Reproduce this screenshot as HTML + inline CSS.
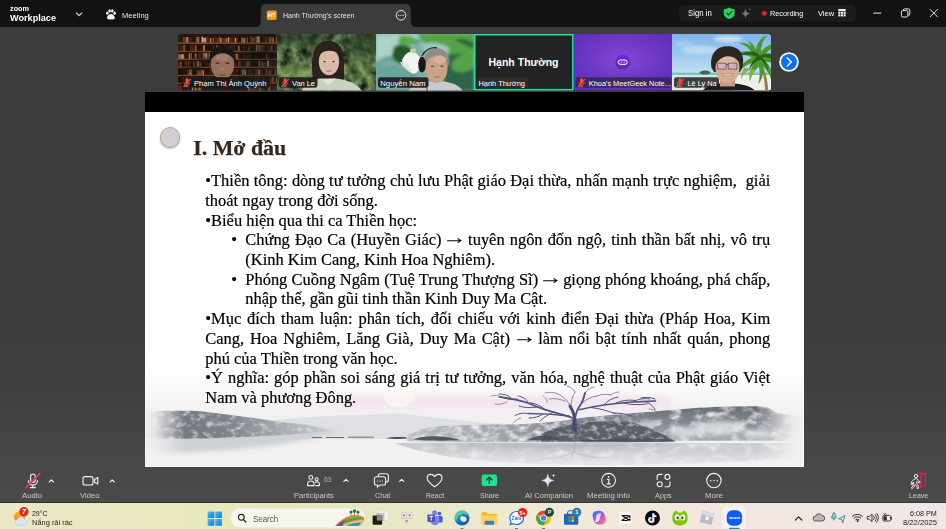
<!DOCTYPE html>
<html lang="vi">
<head>
<meta charset="utf-8">
<title>Zoom Workplace</title>
<style>
html,body{margin:0;padding:0;}
body{width:946px;height:529px;overflow:hidden;position:relative;background:linear-gradient(180deg,#3c3c3c 0,#3c3c3c 320px,#414141 400px,#474747 460px,#4a4a4a 502px);font-family:"Liberation Sans",sans-serif;color:#fff;}
.abs{position:absolute;}
.fx{position:absolute;white-space:pre;line-height:1;transform-origin:0 0;}
#titlebar{left:0;top:0;width:946px;height:27px;background:#121212;}
#tab{left:260px;top:4px;width:150px;height:23px;background:#424242;border-radius:6px 6px 0 0;}
.tt{position:absolute;white-space:pre;font-size:8.5px;color:#e8e8e8;}
/* thumbnails */
.thumb{position:absolute;top:34px;height:57px;overflow:hidden;}
.nm{position:absolute;left:1px;bottom:1px;height:11px;line-height:11px;font-size:7.8px;color:#fff;background:rgba(30,30,30,.55);padding:0 3px 0 3px;border-radius:2px;white-space:pre;}
/* slide */
#black{left:145px;top:92px;width:658.5px;height:20px;background:#000;}
#slide{left:145px;top:112px;width:658.5px;height:354.6px;background:#fff;overflow:hidden;}
.ln{position:absolute;white-space:pre;font-family:"Liberation Serif",serif;font-size:16.45px;line-height:20px;color:#000;height:20px;-webkit-text-stroke:0.2px #000;}
.ar{display:inline-block;transform:scale(1.48,1.15) translateY(-1.6px);}
.j{white-space:normal;text-align:justify;text-align-last:justify;}
/* toolbar */
.tb{position:absolute;top:488px;font-size:8px;color:#cfcfcf;text-align:center;width:60px;margin-left:-30px;white-space:pre;}
/* taskbar */
#taskbar{left:0;top:503px;width:946px;height:26px;background:linear-gradient(90deg,#ece6c4 0%,#ebe8c2 12%,#e6e8b8 30%,#e9e9c8 45%,#f0ead8 60%,#f3e6df 75%,#f1e6e6 100%);}
.tk{position:absolute;color:#222;white-space:pre;}
</style>
</head>
<body>
<!-- title bar -->
<div id="titlebar" class="abs"></div>
<!--TT-START-->
<svg class="abs" style="left:0;top:0" width="946" height="28" viewBox="0 0 946 28" font-family="Liberation Sans, sans-serif">
<!-- tab shape with flared bottom -->
<path d="M255 27c3.500 0 5.800-2 5.800-5.500V9a5 5 0 0 1 5-5h140a5 5 0 0 1 5 5v12.500c0 3.500 2.300 5.500 5.800 5.500v1H255z" fill="#3c3c3c"/>
<!-- workplace chevron -->
<path d="M76.400 13l2.700 2.700l2.700-2.700" fill="none" stroke="#d8d8d8" stroke-width="1.100" stroke-linecap="round" stroke-linejoin="round"/>
<!-- paw / meeting icon -->
<g fill="#f4f4f4">
  <ellipse cx="107.300" cy="13.200" rx="1.250" ry="1.600"/><ellipse cx="109.600" cy="10.900" rx="1.250" ry="1.600"/><ellipse cx="112.300" cy="10.900" rx="1.250" ry="1.600"/><ellipse cx="114.600" cy="13.200" rx="1.250" ry="1.600"/>
  <path d="M110.950 14c2 0 3.900 2 3.900 3.800c0 1.300-1 1.700-2 1.700c-.800 0-1.300-.300-1.900-.300s-1.100.300-1.900.300c-1 0-2-.400-2-1.700c0-1.800 1.900-3.800 3.900-3.800z"/>
</g>
<!-- HT badge -->
<rect x="266.700" y="10.400" width="10" height="9.500" rx="2" fill="#f7981c"/>
<text x="271.700" y="17.300" font-size="5.600" font-weight="bold" fill="#fff" text-anchor="middle">HT</text>
<!-- tab more -->
<circle cx="401" cy="15.300" r="4.800" fill="none" stroke="#e6e6e6" stroke-width="1"/>
<circle cx="398.800" cy="15.300" r=".65" fill="#e6e6e6"/><circle cx="401" cy="15.300" r=".65" fill="#e6e6e6"/><circle cx="403.200" cy="15.300" r=".65" fill="#e6e6e6"/>
<!-- right pill -->
<rect x="679" y="5" width="177" height="16.700" rx="5" fill="#1c1c1c"/>
<!-- shield -->
<path d="M729.200 7.600c1.700 1 3.500 1.500 5.400 1.600v4.300c0 2.800-2.300 4.600-5.400 5.600c-3.100-1-5.400-2.800-5.400-5.600V9.200c1.900-.100 3.700-.600 5.400-1.600z" fill="#23d45c"/>
<path d="M726.700 13.200l1.800 1.800l3.400-3.600" fill="none" stroke="#103a1c" stroke-width="1.200" stroke-linecap="round" stroke-linejoin="round"/>
<!-- sparkle -->
<path d="M745.600 8.800c.500 3 1.600 4.200 4.600 4.700c-3 .500-4.100 1.700-4.600 4.700c-.500-3-1.600-4.200-4.600-4.700c3-.500 4.100-1.700 4.600-4.700z" fill="#777"/>
<circle cx="749.800" cy="9.200" r=".7" fill="#777"/>
<!-- rec dot -->
<circle cx="764.400" cy="13.300" r="2.400" fill="#e3262b"/>
<!-- view grid -->
<g fill="#f2f2f2"><rect x="838.300" y="9.100" width="7.400" height="2" rx=".4"/><rect x="838.300" y="11.700" width="2.100" height="2.100"/><rect x="840.950" y="11.700" width="2.100" height="2.100"/><rect x="843.600" y="11.700" width="2.100" height="2.100"/><rect x="838.300" y="14.300" width="2.100" height="2.100"/><rect x="840.950" y="14.300" width="2.100" height="2.100"/><rect x="843.600" y="14.300" width="2.100" height="2.100"/></g>
<!-- window controls -->
<path d="M873.200 13.100h8" stroke="#e8e8e8" stroke-width="1"/>
<rect x="901.400" y="10.600" width="6.400" height="6.400" rx="1.200" fill="none" stroke="#e8e8e8" stroke-width="1"/>
<path d="M903.300 10.600v-.400a1.300 1.300 0 0 1 1.300-1.300h3.900a1.300 1.300 0 0 1 1.300 1.300v3.900a1.300 1.300 0 0 1-1.300 1.300h-.600" fill="none" stroke="#e8e8e8" stroke-width="1"/>
<path d="M930.200 9.500l7.200 7.200M937.400 9.500l-7.200 7.200" stroke="#e8e8e8" stroke-width="1" stroke-linecap="round"/>
</svg>
<!--TT-END-->

<!-- thumbnails -->
<!--THUMBS-START-->
<svg class="abs" style="left:0;top:0" width="946" height="100" viewBox="0 0 946 100">
<defs>
  <filter id="b1" x="-20%" y="-20%" width="140%" height="140%"><feGaussianBlur stdDeviation="0.6"/></filter>
  <filter id="b2" x="-20%" y="-20%" width="140%" height="140%"><feGaussianBlur stdDeviation="1.4"/></filter>
  <filter id="b3" x="-30%" y="-30%" width="160%" height="160%"><feGaussianBlur stdDeviation="3"/></filter>
  <filter id="forest" x="0" y="0" width="100%" height="100%" color-interpolation-filters="sRGB">
    <feTurbulence type="fractalNoise" baseFrequency="0.12 0.1" numOctaves="3" seed="7" result="n"/>
    <feColorMatrix in="n" type="matrix" values="0.8 0 0 0 -0.1  0.9 0 0 0 -0.07  0.62 0 0 0 -0.07  0 0 0 0 1"/>
    <feGaussianBlur stdDeviation="0.5"/>
  </filter>
  <filter id="books" x="0" y="0" width="100%" height="100%">
    <feTurbulence type="fractalNoise" baseFrequency="0.45 0.02" numOctaves="2" seed="3" result="n"/>
    <feColorMatrix in="n" type="matrix" values="2.6 0 0 0 -0.75  1.7 0 0 0 -0.55  1.0 0 0 0 -0.32  0 0 0 0 1"/>
  </filter>
  <pattern id="bk" x="0" y="0" width="31" height="8.1" patternUnits="userSpaceOnUse">
    <rect width="31" height="8.1" fill="#2b1a12"/>
    <rect x="0.5" y="1.6" width="1.6" height="5.4" fill="#c9a27a"/><rect x="2.4" y="2" width="1.2" height="5" fill="#7b3424"/>
    <rect x="3.9" y="1.4" width="1.4" height="5.6" fill="#a8673f"/><rect x="5.6" y="2.2" width="1" height="4.8" fill="#d8c4a4"/>
    <rect x="7" y="1.8" width="1.6" height="5.2" fill="#3d4a48"/><rect x="9" y="1.5" width="1.2" height="5.5" fill="#b78252"/>
    <rect x="10.6" y="2.4" width="1.5" height="4.6" fill="#5a2a1e"/><rect x="12.5" y="1.6" width="1.2" height="5.4" fill="#d2b48c"/>
    <rect x="14" y="2" width="1.7" height="5" fill="#8a4a2c"/><rect x="16.2" y="1.5" width="1.1" height="5.5" fill="#2f3d3c"/>
    <rect x="17.6" y="2.2" width="1.5" height="4.8" fill="#c08a5a"/><rect x="19.6" y="1.7" width="1.2" height="5.3" fill="#e0cdb0"/>
    <rect x="21.2" y="2.1" width="1.5" height="4.9" fill="#6e3020"/><rect x="23" y="1.5" width="1.2" height="5.5" fill="#a97c52"/>
    <rect x="24.6" y="2.3" width="1.6" height="4.7" fill="#3a2a22"/><rect x="26.6" y="1.7" width="1.3" height="5.3" fill="#bd9468"/>
    <rect x="28.3" y="2" width="1.4" height="5" fill="#84402a"/>
    <rect x="0" y="7" width="31" height="1.1" fill="#b9652c"/>
  </pattern>
  <clipPath id="c1"><rect x="178" y="34" width="99" height="57" rx="3"/></clipPath>
  <clipPath id="c2"><rect x="277" y="34" width="99" height="57"/></clipPath>
  <clipPath id="c3"><rect x="376" y="34" width="98" height="57"/></clipPath>
  <clipPath id="c5"><rect x="574" y="34" width="98" height="57"/></clipPath>
  <clipPath id="c6"><path d="M672 34H768a3 3 0 0 1 3 3V88a3 3 0 0 1-3 3H672z"/></clipPath>
  <radialGradient id="pg" cx="0.5" cy="0.45" r="0.65"><stop offset="0" stop-color="#8148d2"/><stop offset="0.6" stop-color="#6c36c6"/><stop offset="1" stop-color="#5f2cbc"/></radialGradient>
  <linearGradient id="sky" x1="0" y1="0" x2="0" y2="1"><stop offset="0" stop-color="#7fb4ea"/><stop offset="0.35" stop-color="#9cc8f0"/><stop offset="0.7" stop-color="#c4def2"/><stop offset="1" stop-color="#dfe9ee"/></linearGradient>
  <g id="micoff">
    <path d="M2.500 0.800a1.500 1.500 0 0 1 3 0v2.800a1.500 1.500 0 0 1-3 0z" fill="#ee4b4b"/>
    <path d="M1.200 3.400a2.800 2.800 0 0 0 5.600 0M4 6.200v1.400M2.400 7.700h3.200" stroke="#ee4b4b" stroke-width="1" fill="none"/>
    <path d="M0.600 8.100L7.600-0.200" stroke="#ee4b4b" stroke-width="1.300"/>
  </g>
</defs>

<g transform="translate(0,34) scale(1,0.9895) translate(0,-34)">
<!-- T1 bookshelf -->
<g clip-path="url(#c1)">
  <rect x="178" y="34" width="99" height="57" fill="#24160f"/>
  <g filter="url(#b1)" opacity=".9">
<rect x="178.5" y="37.4" width="2.0" height="5.4" fill="#23302f"/>
<rect x="180.5" y="37.3" width="1.2" height="5.5" fill="#1e1410"/>
<rect x="182.7" y="37.1" width="3.2" height="5.7" fill="#7b3424"/>
<rect x="186.1" y="37.1" width="2.4" height="5.7" fill="#b78252"/>
<rect x="188.5" y="37.9" width="1.0" height="4.9" fill="#7b3424"/>
<rect x="189.5" y="37.6" width="3.2" height="5.2" fill="#23302f"/>
<rect x="192.7" y="37.0" width="2.0" height="5.8" fill="#1e1410"/>
<rect x="195.0" y="37.0" width="1.0" height="5.8" fill="#23302f"/>
<rect x="196.3" y="36.9" width="3.2" height="5.9" fill="#a8673f"/>
<rect x="199.5" y="38.1" width="2.0" height="4.7" fill="#1a1412"/>
<rect x="201.5" y="36.7" width="1.6" height="6.1" fill="#d8c4a4"/>
<rect x="203.1" y="37.8" width="3.2" height="5.0" fill="#c9a27a"/>
<rect x="206.3" y="36.4" width="1.6" height="6.4" fill="#6e3020"/>
<rect x="207.9" y="36.8" width="2.0" height="6.0" fill="#4a2418"/>
<rect x="209.9" y="38.2" width="1.4" height="4.6" fill="#c08a5a"/>
<rect x="212.5" y="37.9" width="1.6" height="4.9" fill="#94502e"/>
<rect x="214.3" y="36.4" width="2.0" height="6.4" fill="#4a2418"/>
<rect x="216.5" y="38.0" width="2.4" height="4.8" fill="#6e3020"/>
<rect x="218.9" y="36.6" width="1.0" height="6.2" fill="#8a4a2c"/>
<rect x="220.2" y="37.8" width="1.4" height="5.0" fill="#c9a27a"/>
<rect x="221.9" y="38.0" width="2.4" height="4.8" fill="#5a3020"/>
<rect x="224.3" y="38.2" width="1.6" height="4.6" fill="#8a4a2c"/>
<rect x="226.1" y="38.1" width="1.6" height="4.7" fill="#a8673f"/>
<rect x="228.0" y="37.1" width="1.2" height="5.7" fill="#c9a27a"/>
<rect x="229.4" y="37.3" width="1.2" height="5.5" fill="#5a3020"/>
<rect x="230.8" y="37.6" width="1.2" height="5.2" fill="#2f3d3c"/>
<rect x="232.3" y="37.9" width="1.2" height="4.9" fill="#4a2418"/>
<rect x="233.8" y="36.6" width="1.2" height="6.2" fill="#6e3020"/>
<rect x="235.2" y="38.0" width="1.0" height="4.8" fill="#d8c4a4"/>
<rect x="236.4" y="37.7" width="1.2" height="5.1" fill="#6e3020"/>
<rect x="237.9" y="37.3" width="1.6" height="5.5" fill="#1a1412"/>
<rect x="239.5" y="37.3" width="1.2" height="5.5" fill="#1e1410"/>
<rect x="241.0" y="37.7" width="2.0" height="5.1" fill="#a8673f"/>
<rect x="243.0" y="38.1" width="2.4" height="4.7" fill="#c9a27a"/>
<rect x="245.4" y="37.9" width="1.0" height="4.9" fill="#7b3424"/>
<rect x="246.7" y="37.5" width="1.2" height="5.3" fill="#a8673f"/>
<rect x="248.1" y="37.1" width="2.4" height="5.7" fill="#1e1410"/>
<rect x="250.5" y="36.6" width="1.0" height="6.2" fill="#94502e"/>
<rect x="251.5" y="37.3" width="1.0" height="5.5" fill="#a8673f"/>
<rect x="252.7" y="38.1" width="1.2" height="4.7" fill="#a8673f"/>
<rect x="254.2" y="36.8" width="1.0" height="6.0" fill="#2f3d3c"/>
<rect x="255.4" y="36.6" width="1.0" height="6.2" fill="#94502e"/>
<rect x="256.6" y="36.6" width="3.2" height="6.2" fill="#c9a27a"/>
<rect x="263.5" y="36.9" width="1.4" height="5.9" fill="#3a2a22"/>
<rect x="265.2" y="37.4" width="2.4" height="5.4" fill="#5a3020"/>
<rect x="268.9" y="37.3" width="2.0" height="5.5" fill="#a8673f"/>
<rect x="271.2" y="36.8" width="1.0" height="6.0" fill="#94502e"/>
<rect x="272.4" y="37.5" width="1.4" height="5.3" fill="#c9a27a"/>
<rect x="274.1" y="37.9" width="1.2" height="4.9" fill="#1e1410"/>
<rect x="275.6" y="36.6" width="1.6" height="6.2" fill="#94502e"/>
<rect x="178" y="42.6" width="99" height="1.3" fill="#b0622c"/>
<rect x="178.3" y="45.3" width="2.4" height="6.0" fill="#3a2a22"/>
<rect x="180.7" y="46.3" width="1.2" height="5.0" fill="#6e3020"/>
<rect x="181.9" y="45.8" width="1.2" height="5.5" fill="#2f3d3c"/>
<rect x="183.1" y="45.0" width="2.4" height="6.3" fill="#a8673f"/>
<rect x="185.5" y="45.9" width="1.0" height="5.4" fill="#23302f"/>
<rect x="186.7" y="45.8" width="1.6" height="5.5" fill="#1e1410"/>
<rect x="190.2" y="45.5" width="3.2" height="5.8" fill="#7b3424"/>
<rect x="193.6" y="46.7" width="1.4" height="4.6" fill="#5a3020"/>
<rect x="195.2" y="45.3" width="1.2" height="6.0" fill="#c9a27a"/>
<rect x="199.6" y="45.5" width="1.0" height="5.8" fill="#2a1a14"/>
<rect x="200.6" y="46.3" width="2.4" height="5.0" fill="#4a2418"/>
<rect x="203.0" y="45.3" width="2.4" height="6.0" fill="#c9a27a"/>
<rect x="205.4" y="46.2" width="1.2" height="5.1" fill="#1e1410"/>
<rect x="206.9" y="45.6" width="2.0" height="5.7" fill="#1e1410"/>
<rect x="209.1" y="46.5" width="3.2" height="4.8" fill="#1e1410"/>
<rect x="212.6" y="45.9" width="1.6" height="5.4" fill="#2f3d3c"/>
<rect x="214.2" y="45.7" width="1.6" height="5.6" fill="#2a1a14"/>
<rect x="216.0" y="45.5" width="1.6" height="5.8" fill="#c08a5a"/>
<rect x="217.9" y="46.3" width="3.2" height="5.0" fill="#d8c4a4"/>
<rect x="221.1" y="44.9" width="1.4" height="6.4" fill="#2a1a14"/>
<rect x="225.1" y="45.7" width="1.6" height="5.6" fill="#c08a5a"/>
<rect x="227.9" y="46.4" width="3.2" height="4.9" fill="#7b3424"/>
<rect x="231.1" y="44.9" width="1.6" height="6.4" fill="#2f3d3c"/>
<rect x="233.0" y="45.0" width="3.2" height="6.3" fill="#23302f"/>
<rect x="236.5" y="45.9" width="1.0" height="5.4" fill="#1e1410"/>
<rect x="237.8" y="45.8" width="2.0" height="5.5" fill="#b78252"/>
<rect x="240.1" y="45.5" width="1.4" height="5.8" fill="#1a1412"/>
<rect x="241.8" y="45.2" width="1.2" height="6.1" fill="#1a1412"/>
<rect x="243.3" y="45.8" width="1.4" height="5.5" fill="#5a3020"/>
<rect x="246.7" y="45.0" width="1.0" height="6.3" fill="#1e1410"/>
<rect x="248.0" y="46.5" width="1.0" height="4.8" fill="#94502e"/>
<rect x="249.3" y="45.0" width="1.6" height="6.3" fill="#3a2a22"/>
<rect x="251.1" y="45.8" width="1.4" height="5.5" fill="#1e1410"/>
<rect x="255.9" y="45.0" width="1.6" height="6.3" fill="#c9a27a"/>
<rect x="258.5" y="45.4" width="1.4" height="5.9" fill="#c08a5a"/>
<rect x="260.1" y="45.4" width="1.0" height="5.9" fill="#94502e"/>
<rect x="261.4" y="45.4" width="2.0" height="5.9" fill="#8a4a2c"/>
<rect x="263.6" y="45.6" width="1.0" height="5.7" fill="#6e3020"/>
<rect x="264.9" y="46.3" width="1.2" height="5.0" fill="#2a1a14"/>
<rect x="266.4" y="46.3" width="1.2" height="5.0" fill="#1e1410"/>
<rect x="267.9" y="46.3" width="3.2" height="5.0" fill="#2f3d3c"/>
<rect x="271.3" y="45.6" width="1.2" height="5.7" fill="#c08a5a"/>
<rect x="272.5" y="45.1" width="1.2" height="6.2" fill="#4a2418"/>
<rect x="274.9" y="45.7" width="3.2" height="5.6" fill="#3a2a22"/>
<rect x="178" y="51.1" width="99" height="1.3" fill="#b0622c"/>
<rect x="178.4" y="54.4" width="2.4" height="4.8" fill="#c9a27a"/>
<rect x="181.0" y="54.4" width="3.2" height="4.8" fill="#e0cdb0"/>
<rect x="184.4" y="53.2" width="2.0" height="6.0" fill="#4a2418"/>
<rect x="186.4" y="53.5" width="1.0" height="5.7" fill="#2a1a14"/>
<rect x="187.6" y="54.3" width="1.2" height="4.9" fill="#4a2418"/>
<rect x="188.8" y="53.6" width="1.4" height="5.6" fill="#d8c4a4"/>
<rect x="190.5" y="53.2" width="1.6" height="6.0" fill="#a8673f"/>
<rect x="192.3" y="54.0" width="1.6" height="5.2" fill="#1e1410"/>
<rect x="194.1" y="53.1" width="1.0" height="6.1" fill="#7b3424"/>
<rect x="195.3" y="53.9" width="1.4" height="5.3" fill="#e0cdb0"/>
<rect x="196.7" y="53.2" width="1.0" height="6.0" fill="#1e1410"/>
<rect x="197.7" y="53.6" width="3.2" height="5.6" fill="#6e3020"/>
<rect x="202.6" y="53.1" width="2.4" height="6.1" fill="#b78252"/>
<rect x="205.2" y="53.2" width="2.0" height="6.0" fill="#e0cdb0"/>
<rect x="207.4" y="54.5" width="1.2" height="4.7" fill="#b78252"/>
<rect x="208.8" y="53.0" width="1.0" height="6.2" fill="#c9a27a"/>
<rect x="210.1" y="54.1" width="1.0" height="5.1" fill="#1e1410"/>
<rect x="211.3" y="53.4" width="1.4" height="5.8" fill="#4a2418"/>
<rect x="213.0" y="53.7" width="1.0" height="5.5" fill="#6e3020"/>
<rect x="214.0" y="53.2" width="2.4" height="6.0" fill="#d8c4a4"/>
<rect x="216.4" y="53.3" width="1.0" height="5.9" fill="#d8c4a4"/>
<rect x="217.6" y="53.2" width="2.0" height="6.0" fill="#7b3424"/>
<rect x="219.6" y="54.1" width="1.0" height="5.1" fill="#8a4a2c"/>
<rect x="220.9" y="53.9" width="2.0" height="5.3" fill="#1e1410"/>
<rect x="225.3" y="53.9" width="2.0" height="5.3" fill="#7b3424"/>
<rect x="227.5" y="53.1" width="1.6" height="6.1" fill="#b78252"/>
<rect x="229.4" y="52.9" width="1.0" height="6.3" fill="#3a2a22"/>
<rect x="230.7" y="53.9" width="1.6" height="5.3" fill="#1a1412"/>
<rect x="232.6" y="52.9" width="1.4" height="6.3" fill="#2a1a14"/>
<rect x="234.3" y="54.6" width="1.4" height="4.6" fill="#c9a27a"/>
<rect x="235.7" y="53.9" width="2.4" height="5.3" fill="#b78252"/>
<rect x="238.1" y="54.5" width="1.4" height="4.7" fill="#6e3020"/>
<rect x="239.7" y="53.8" width="1.0" height="5.4" fill="#1e1410"/>
<rect x="240.7" y="54.4" width="1.0" height="4.8" fill="#1e1410"/>
<rect x="243.1" y="53.8" width="2.0" height="5.4" fill="#3a2a22"/>
<rect x="245.1" y="54.3" width="1.4" height="4.9" fill="#1e1410"/>
<rect x="246.5" y="53.8" width="2.4" height="5.4" fill="#3a2a22"/>
<rect x="249.2" y="53.9" width="2.4" height="5.3" fill="#3a2a22"/>
<rect x="253.0" y="53.5" width="1.4" height="5.7" fill="#1e1410"/>
<rect x="254.6" y="53.3" width="2.0" height="5.9" fill="#5a3020"/>
<rect x="256.8" y="54.3" width="3.2" height="4.9" fill="#1e1410"/>
<rect x="262.9" y="54.1" width="1.2" height="5.1" fill="#2a1a14"/>
<rect x="264.4" y="54.2" width="1.2" height="5.0" fill="#2a1a14"/>
<rect x="265.8" y="54.2" width="1.6" height="5.0" fill="#e0cdb0"/>
<rect x="267.7" y="53.2" width="1.2" height="6.0" fill="#a8673f"/>
<rect x="269.2" y="53.8" width="3.2" height="5.4" fill="#4a2418"/>
<rect x="272.6" y="53.9" width="3.2" height="5.3" fill="#2f3d3c"/>
<rect x="276.1" y="53.6" width="1.4" height="5.6" fill="#1a1412"/>
<rect x="178" y="59.0" width="99" height="1.3" fill="#b0622c"/>
<rect x="178.4" y="62.4" width="1.4" height="4.8" fill="#5a3020"/>
<rect x="179.8" y="61.8" width="2.0" height="5.4" fill="#a8673f"/>
<rect x="183.7" y="61.0" width="1.4" height="6.2" fill="#4a2418"/>
<rect x="185.4" y="61.3" width="1.4" height="5.9" fill="#94502e"/>
<rect x="187.0" y="62.0" width="1.2" height="5.2" fill="#1e1410"/>
<rect x="188.4" y="61.3" width="1.0" height="5.9" fill="#c08a5a"/>
<rect x="189.7" y="61.6" width="1.4" height="5.6" fill="#23302f"/>
<rect x="191.3" y="61.9" width="1.4" height="5.3" fill="#1e1410"/>
<rect x="193.0" y="61.9" width="1.2" height="5.3" fill="#a8673f"/>
<rect x="194.4" y="61.5" width="2.4" height="5.7" fill="#6e3020"/>
<rect x="197.1" y="61.2" width="2.0" height="6.0" fill="#e0cdb0"/>
<rect x="199.4" y="62.3" width="2.0" height="4.9" fill="#b78252"/>
<rect x="206.0" y="62.5" width="3.2" height="4.7" fill="#3a2a22"/>
<rect x="209.5" y="62.5" width="1.0" height="4.7" fill="#c08a5a"/>
<rect x="210.7" y="61.5" width="1.0" height="5.7" fill="#c9a27a"/>
<rect x="212.0" y="62.2" width="3.2" height="5.0" fill="#3a2a22"/>
<rect x="215.5" y="61.9" width="1.4" height="5.3" fill="#23302f"/>
<rect x="217.1" y="61.7" width="2.4" height="5.5" fill="#2f3d3c"/>
<rect x="219.8" y="61.9" width="1.0" height="5.3" fill="#7b3424"/>
<rect x="221.1" y="61.1" width="1.4" height="6.1" fill="#c9a27a"/>
<rect x="222.7" y="61.7" width="2.0" height="5.5" fill="#c9a27a"/>
<rect x="224.7" y="61.0" width="1.6" height="6.2" fill="#3a2a22"/>
<rect x="226.3" y="61.4" width="2.4" height="5.8" fill="#6e3020"/>
<rect x="228.9" y="62.1" width="1.6" height="5.1" fill="#1e1410"/>
<rect x="230.5" y="61.3" width="1.6" height="5.9" fill="#1a1412"/>
<rect x="232.1" y="61.0" width="3.2" height="6.2" fill="#b78252"/>
<rect x="237.3" y="62.3" width="1.0" height="4.9" fill="#4a2418"/>
<rect x="238.3" y="61.5" width="2.0" height="5.7" fill="#94502e"/>
<rect x="240.3" y="62.3" width="1.4" height="4.9" fill="#6e3020"/>
<rect x="241.9" y="60.9" width="2.4" height="6.3" fill="#2a1a14"/>
<rect x="244.5" y="61.0" width="1.6" height="6.2" fill="#6e3020"/>
<rect x="246.4" y="61.7" width="3.2" height="5.5" fill="#a8673f"/>
<rect x="249.6" y="61.2" width="1.2" height="6.0" fill="#2f3d3c"/>
<rect x="251.1" y="61.2" width="3.2" height="6.0" fill="#1e1410"/>
<rect x="254.3" y="61.0" width="2.4" height="6.2" fill="#1e1410"/>
<rect x="256.9" y="61.3" width="1.6" height="5.9" fill="#1e1410"/>
<rect x="258.5" y="61.2" width="1.6" height="6.0" fill="#b78252"/>
<rect x="261.6" y="62.6" width="2.0" height="4.6" fill="#b78252"/>
<rect x="263.6" y="62.5" width="3.2" height="4.7" fill="#2f3d3c"/>
<rect x="267.1" y="61.0" width="2.0" height="6.2" fill="#d8c4a4"/>
<rect x="269.1" y="61.6" width="2.4" height="5.6" fill="#5a3020"/>
<rect x="271.5" y="61.8" width="3.2" height="5.4" fill="#4a2418"/>
<rect x="274.7" y="62.2" width="3.2" height="5.0" fill="#23302f"/>
<rect x="178" y="67.0" width="99" height="1.3" fill="#b0622c"/>
<rect x="178.5" y="70.3" width="3.2" height="5.2" fill="#1a1412"/>
<rect x="183.4" y="70.7" width="1.0" height="4.8" fill="#2f3d3c"/>
<rect x="187.0" y="70.5" width="1.6" height="5.0" fill="#94502e"/>
<rect x="188.8" y="69.4" width="3.2" height="6.1" fill="#c9a27a"/>
<rect x="192.3" y="70.4" width="1.2" height="5.1" fill="#2f3d3c"/>
<rect x="193.8" y="69.2" width="2.4" height="6.3" fill="#1a1412"/>
<rect x="196.5" y="70.4" width="2.4" height="5.1" fill="#a8673f"/>
<rect x="199.2" y="70.3" width="1.0" height="5.2" fill="#c08a5a"/>
<rect x="200.4" y="70.1" width="2.4" height="5.4" fill="#c08a5a"/>
<rect x="202.8" y="70.7" width="1.2" height="4.8" fill="#d8c4a4"/>
<rect x="204.0" y="70.2" width="1.2" height="5.3" fill="#4a2418"/>
<rect x="208.9" y="69.2" width="3.2" height="6.3" fill="#3a2a22"/>
<rect x="212.1" y="69.4" width="3.2" height="6.1" fill="#2f3d3c"/>
<rect x="215.5" y="69.6" width="1.6" height="5.9" fill="#c9a27a"/>
<rect x="217.3" y="69.7" width="3.2" height="5.8" fill="#1e1410"/>
<rect x="220.5" y="70.6" width="1.4" height="4.9" fill="#c08a5a"/>
<rect x="222.1" y="70.2" width="1.0" height="5.3" fill="#2a1a14"/>
<rect x="223.3" y="69.8" width="3.2" height="5.7" fill="#d8c4a4"/>
<rect x="226.8" y="70.5" width="1.4" height="5.0" fill="#2a1a14"/>
<rect x="228.5" y="69.6" width="1.2" height="5.9" fill="#5a3020"/>
<rect x="232.4" y="69.5" width="2.4" height="6.0" fill="#4a2418"/>
<rect x="235.0" y="69.6" width="2.0" height="5.9" fill="#3a2a22"/>
<rect x="237.2" y="69.3" width="1.4" height="6.2" fill="#23302f"/>
<rect x="238.9" y="69.3" width="1.2" height="6.2" fill="#1e1410"/>
<rect x="240.4" y="69.3" width="1.0" height="6.2" fill="#2a1a14"/>
<rect x="241.7" y="69.8" width="3.2" height="5.7" fill="#c08a5a"/>
<rect x="244.9" y="70.5" width="1.4" height="5.0" fill="#e0cdb0"/>
<rect x="246.3" y="69.4" width="1.2" height="6.1" fill="#2a1a14"/>
<rect x="247.7" y="70.3" width="1.2" height="5.2" fill="#2f3d3c"/>
<rect x="249.2" y="69.7" width="1.6" height="5.8" fill="#5a3020"/>
<rect x="250.8" y="70.1" width="1.2" height="5.4" fill="#3a2a22"/>
<rect x="252.2" y="70.2" width="1.0" height="5.3" fill="#5a3020"/>
<rect x="253.2" y="69.9" width="1.4" height="5.6" fill="#1e1410"/>
<rect x="254.9" y="69.6" width="3.2" height="5.9" fill="#7b3424"/>
<rect x="258.3" y="70.1" width="1.6" height="5.4" fill="#d8c4a4"/>
<rect x="260.2" y="69.5" width="2.4" height="6.0" fill="#5a3020"/>
<rect x="264.4" y="70.3" width="1.0" height="5.2" fill="#1e1410"/>
<rect x="265.6" y="69.3" width="1.0" height="6.2" fill="#c08a5a"/>
<rect x="266.9" y="69.8" width="1.6" height="5.7" fill="#6e3020"/>
<rect x="268.7" y="70.5" width="2.0" height="5.0" fill="#a8673f"/>
<rect x="270.7" y="69.1" width="2.0" height="6.4" fill="#6e3020"/>
<rect x="272.7" y="69.9" width="2.0" height="5.6" fill="#1e1410"/>
<rect x="274.7" y="69.3" width="1.0" height="6.2" fill="#e0cdb0"/>
<rect x="275.7" y="69.9" width="1.2" height="5.6" fill="#3a2a22"/>
<rect x="276.9" y="70.7" width="2.0" height="4.8" fill="#2f3d3c"/>
<rect x="178" y="75.3" width="99" height="1.3" fill="#b0622c"/>
<rect x="178.0" y="78.8" width="1.2" height="4.6" fill="#1a1412"/>
<rect x="179.4" y="78.1" width="1.6" height="5.3" fill="#1e1410"/>
<rect x="181.3" y="78.2" width="1.2" height="5.2" fill="#7b3424"/>
<rect x="182.7" y="77.9" width="1.4" height="5.5" fill="#c08a5a"/>
<rect x="184.3" y="78.3" width="1.2" height="5.1" fill="#4a2418"/>
<rect x="185.5" y="77.3" width="1.2" height="6.1" fill="#c08a5a"/>
<rect x="186.9" y="77.7" width="1.0" height="5.7" fill="#b78252"/>
<rect x="188.2" y="77.7" width="1.2" height="5.7" fill="#2a1a14"/>
<rect x="189.4" y="78.2" width="2.4" height="5.2" fill="#d8c4a4"/>
<rect x="192.0" y="77.5" width="3.2" height="5.9" fill="#3a2a22"/>
<rect x="195.5" y="78.1" width="3.2" height="5.3" fill="#23302f"/>
<rect x="198.9" y="78.3" width="1.0" height="5.1" fill="#4a2418"/>
<rect x="200.2" y="77.4" width="2.4" height="6.0" fill="#1a1412"/>
<rect x="202.9" y="77.7" width="2.0" height="5.7" fill="#d8c4a4"/>
<rect x="205.1" y="78.3" width="1.2" height="5.1" fill="#1e1410"/>
<rect x="206.3" y="78.0" width="1.6" height="5.4" fill="#a8673f"/>
<rect x="208.2" y="77.7" width="1.0" height="5.7" fill="#c9a27a"/>
<rect x="209.4" y="78.6" width="1.6" height="4.8" fill="#5a3020"/>
<rect x="211.0" y="78.3" width="1.2" height="5.1" fill="#b78252"/>
<rect x="215.4" y="78.1" width="1.6" height="5.3" fill="#5a3020"/>
<rect x="217.2" y="78.7" width="1.0" height="4.7" fill="#b78252"/>
<rect x="218.4" y="77.4" width="1.4" height="6.0" fill="#94502e"/>
<rect x="220.1" y="77.5" width="3.2" height="5.9" fill="#1e1410"/>
<rect x="223.6" y="78.6" width="3.2" height="4.8" fill="#b78252"/>
<rect x="227.1" y="77.4" width="1.6" height="6.0" fill="#2a1a14"/>
<rect x="229.0" y="77.9" width="1.2" height="5.5" fill="#8a4a2c"/>
<rect x="230.5" y="78.3" width="2.0" height="5.1" fill="#94502e"/>
<rect x="232.8" y="78.0" width="1.0" height="5.4" fill="#5a3020"/>
<rect x="234.0" y="77.7" width="1.2" height="5.7" fill="#c9a27a"/>
<rect x="237.1" y="77.8" width="1.0" height="5.6" fill="#b78252"/>
<rect x="238.4" y="78.7" width="1.2" height="4.7" fill="#2f3d3c"/>
<rect x="239.9" y="77.4" width="1.4" height="6.0" fill="#1e1410"/>
<rect x="241.5" y="78.5" width="1.0" height="4.9" fill="#1e1410"/>
<rect x="242.5" y="78.7" width="1.6" height="4.7" fill="#23302f"/>
<rect x="244.3" y="77.5" width="2.4" height="5.9" fill="#4a2418"/>
<rect x="246.7" y="78.5" width="1.6" height="4.9" fill="#2f3d3c"/>
<rect x="248.6" y="78.4" width="1.0" height="5.0" fill="#c9a27a"/>
<rect x="249.6" y="77.8" width="1.0" height="5.6" fill="#6e3020"/>
<rect x="254.8" y="78.2" width="1.2" height="5.2" fill="#e0cdb0"/>
<rect x="256.3" y="78.5" width="1.2" height="4.9" fill="#7b3424"/>
<rect x="257.5" y="77.8" width="2.4" height="5.6" fill="#c08a5a"/>
<rect x="260.2" y="77.3" width="1.2" height="6.1" fill="#23302f"/>
<rect x="261.4" y="77.4" width="1.6" height="6.0" fill="#6e3020"/>
<rect x="263.2" y="77.4" width="1.2" height="6.0" fill="#b78252"/>
<rect x="264.6" y="78.4" width="1.2" height="5.0" fill="#6e3020"/>
<rect x="266.0" y="77.9" width="1.6" height="5.5" fill="#23302f"/>
<rect x="267.6" y="78.4" width="3.2" height="5.0" fill="#94502e"/>
<rect x="270.8" y="78.1" width="1.0" height="5.3" fill="#8a4a2c"/>
<rect x="271.8" y="77.5" width="2.0" height="5.9" fill="#b78252"/>
<rect x="274.1" y="78.3" width="2.4" height="5.1" fill="#4a2418"/>
<rect x="276.5" y="78.6" width="2.4" height="4.8" fill="#e0cdb0"/>
<rect x="178" y="83.2" width="99" height="1.3" fill="#b0622c"/>
<rect x="178.0" y="86.1" width="1.4" height="5.4" fill="#6e3020"/>
<rect x="179.6" y="85.5" width="1.4" height="6.0" fill="#8a4a2c"/>
<rect x="181.0" y="85.8" width="1.4" height="5.7" fill="#6e3020"/>
<rect x="183.6" y="86.1" width="1.4" height="5.4" fill="#3a2a22"/>
<rect x="185.0" y="86.4" width="2.0" height="5.1" fill="#2a1a14"/>
<rect x="187.3" y="85.3" width="1.6" height="6.2" fill="#2f3d3c"/>
<rect x="189.2" y="86.2" width="2.4" height="5.3" fill="#23302f"/>
<rect x="191.8" y="86.4" width="1.2" height="5.1" fill="#d8c4a4"/>
<rect x="193.0" y="85.4" width="1.2" height="6.1" fill="#7b3424"/>
<rect x="194.4" y="85.4" width="2.0" height="6.1" fill="#c9a27a"/>
<rect x="196.6" y="85.2" width="2.4" height="6.3" fill="#a8673f"/>
<rect x="199.3" y="85.2" width="1.4" height="6.3" fill="#d8c4a4"/>
<rect x="200.7" y="86.7" width="3.2" height="4.8" fill="#8a4a2c"/>
<rect x="204.1" y="86.0" width="1.6" height="5.5" fill="#7b3424"/>
<rect x="205.9" y="86.5" width="1.6" height="5.0" fill="#8a4a2c"/>
<rect x="207.5" y="86.3" width="1.6" height="5.2" fill="#b78252"/>
<rect x="209.4" y="85.3" width="1.0" height="6.2" fill="#c08a5a"/>
<rect x="210.6" y="85.6" width="2.0" height="5.9" fill="#8a4a2c"/>
<rect x="212.9" y="86.7" width="1.0" height="4.8" fill="#6e3020"/>
<rect x="214.1" y="86.2" width="1.4" height="5.3" fill="#7b3424"/>
<rect x="217.3" y="86.3" width="1.0" height="5.2" fill="#e0cdb0"/>
<rect x="218.5" y="85.7" width="1.4" height="5.8" fill="#b78252"/>
<rect x="220.1" y="85.9" width="1.4" height="5.6" fill="#c9a27a"/>
<rect x="221.5" y="85.8" width="2.4" height="5.7" fill="#7b3424"/>
<rect x="224.1" y="86.8" width="1.0" height="4.7" fill="#8a4a2c"/>
<rect x="225.3" y="86.8" width="1.6" height="4.7" fill="#6e3020"/>
<rect x="227.2" y="86.0" width="1.4" height="5.5" fill="#1a1412"/>
<rect x="228.6" y="86.4" width="1.2" height="5.1" fill="#4a2418"/>
<rect x="229.8" y="86.9" width="1.2" height="4.6" fill="#1e1410"/>
<rect x="231.2" y="85.9" width="1.0" height="5.6" fill="#1e1410"/>
<rect x="232.5" y="85.3" width="1.0" height="6.2" fill="#2a1a14"/>
<rect x="235.1" y="85.6" width="3.2" height="5.9" fill="#4a2418"/>
<rect x="238.3" y="86.6" width="3.2" height="4.9" fill="#b78252"/>
<rect x="241.7" y="86.4" width="3.2" height="5.1" fill="#5a3020"/>
<rect x="245.1" y="86.0" width="2.4" height="5.5" fill="#2a1a14"/>
<rect x="247.7" y="85.2" width="1.4" height="6.3" fill="#b78252"/>
<rect x="249.1" y="85.3" width="1.0" height="6.2" fill="#d8c4a4"/>
<rect x="250.3" y="86.8" width="2.0" height="4.7" fill="#94502e"/>
<rect x="252.5" y="86.8" width="3.2" height="4.7" fill="#94502e"/>
<rect x="256.0" y="86.4" width="2.4" height="5.1" fill="#6e3020"/>
<rect x="258.6" y="86.6" width="2.4" height="4.9" fill="#c08a5a"/>
<rect x="261.0" y="85.4" width="3.2" height="6.1" fill="#5a3020"/>
<rect x="264.4" y="85.8" width="2.4" height="5.7" fill="#2f3d3c"/>
<rect x="266.8" y="86.2" width="1.2" height="5.3" fill="#4a2418"/>
<rect x="268.0" y="85.1" width="2.4" height="6.4" fill="#b78252"/>
<rect x="270.7" y="86.4" width="3.2" height="5.1" fill="#2f3d3c"/>
<rect x="274.1" y="86.2" width="2.4" height="5.3" fill="#6e3020"/>
<rect x="178" y="91.3" width="99" height="1.3" fill="#b0622c"/>
  </g>
  <g filter="url(#b2)">
    <rect x="196" y="58" width="30" height="7" fill="#1a100c" opacity=".55"/>
    <rect x="250" y="52" width="27" height="7" fill="#1a100c" opacity=".6"/>
    <rect x="182" y="66" width="20" height="7" fill="#1a100c" opacity=".5"/>
    <rect x="240" y="36" width="37" height="6" fill="#1a100c" opacity=".35"/>
    <rect x="178" y="44" width="99" height="48" fill="#140c08" opacity=".28"/>
    <rect x="240" y="44" width="37" height="48" fill="#0c1414" opacity=".3"/>
  </g>
  <g filter="url(#b1)">
    <path d="M209.500 63c-1-9 3.500-17 13-17s14 7.500 13 17l-2 8h-22z" fill="#1b1614"/>
    <ellipse cx="222.500" cy="64.500" rx="11.800" ry="15" fill="#94705c"/>
    <ellipse cx="222.500" cy="58" rx="7" ry="3.500" fill="#a88370" opacity=".6"/>
    <path d="M210.200 61c1-9 6.500-13.500 12.300-13.500s11.300 4.500 12.300 13.500c-3-5-7.500-7.500-12.300-7.500s-9.300 2.500-12.300 7.500z" fill="#1b1614"/>
    <ellipse cx="217.500" cy="63.500" rx="2" ry="0.800" fill="#3a2a24"/><ellipse cx="227.500" cy="63.500" rx="2" ry="0.800" fill="#3a2a24"/>
    <ellipse cx="222.500" cy="70" rx="2.200" ry="1.400" fill="#a5806a"/>
    <path d="M219.500 75.500h6" stroke="#6a4238" stroke-width="1.100"/>
    <path d="M201 92c1-8 8-13 16-14h11c8 1 15 6 17 14z" fill="#231c1a"/>
    
  </g>
</g>
<!-- T2 forest -->
<g clip-path="url(#c2)">
  <rect x="277" y="34" width="99" height="57" fill="#3f5c34"/>
  <rect x="277" y="34" width="99" height="57" filter="url(#forest)"/>
  <g filter="url(#b3)">
    <ellipse cx="300" cy="38" rx="30" ry="8" fill="#1f3320" opacity=".6"/>
    <ellipse cx="362" cy="42" rx="20" ry="12" fill="#22361f" opacity=".6"/>
    <ellipse cx="298" cy="76" rx="20" ry="11" fill="#7fa55a" opacity=".55"/>
    <ellipse cx="362" cy="70" rx="12" ry="12" fill="#6f9a50" opacity=".4"/>
  </g>
  <g filter="url(#b1)">
    <path d="M314 84c-3-14-3-29 2-36.500c3.500-5 7.500-6.500 12.500-6.500s9.500 2 12.500 7c4 8 3 24 3 36z" fill="#2a211f"/>
    <path d="M302 92c2-8 10-12 18-13h16c10 1 22 5 26 13z" fill="#c8d2c0"/>
    <path d="M322 80l6 6l8-7z" fill="#e6e2d8"/>
    <ellipse cx="329" cy="62" rx="10.2" ry="13.6" fill="#dab9a7"/>
    <path d="M318 56c1-7 5-11 11-11s10 4 11 10c-4-3-7-4-11-4s-8 2-11 5z" fill="#2a211f"/>
    <path d="M321 62h6.500m3 0h6.500" stroke="#e8dcd8" stroke-width="2.6" opacity=".55"/>
    <ellipse cx="324.500" cy="62" rx="1.500" ry="0.700" fill="#4a3530"/><ellipse cx="333.500" cy="62" rx="1.500" ry="0.700" fill="#4a3530"/>
    <path d="M326.500 71.500h5" stroke="#b0605c" stroke-width="1.100"/>
  </g>
</g>
<!-- T3 lotus -->
<g clip-path="url(#c3)">
  <rect x="376" y="34" width="98" height="57" fill="#7fb0a6"/>
  <g filter="url(#b2)">
    <path d="M376 34h44l-6 12l-16 8l-22 14z" fill="#a9d2c8"/>
    <path d="M376 62c10-8 26-8 36 0c8 6 6 22-2 31h-34z" fill="#6aa399"/>
    <path d="M380 66c8-4 18-3 26 3" stroke="#8cc0b6" stroke-width="1.500" fill="none"/>
    <path d="M394 47c6-4 13-3 18 2c2 6-2 13-7 16c-6 0-11-4-13-9z" fill="#255428"/>
    <path d="M400 36c8-2 16 2 20 6c-6 4-14 5-22 2z" fill="#5aaa4c"/>
    <path d="M418 34h56v20c-10 6-24 4-34-2c-10-4-18-10-22-18z" fill="#55a245"/>
    <path d="M420 45c10-4 24-2 30 4c-2 6-10 10-20 8z" fill="#98c9ba"/>
    <path d="M448 56c8-4 18-2 26 4v31h-28c-4-10-4-24 2-35z" fill="#2f6548"/>
    <path d="M452 62c6-6 14-10 22-8v14c-8 6-16 6-22 2z" fill="#55a24a"/>
    <path d="M438 50c6 2 10 8 10 14l-8 4z" fill="#b4d8cf"/>
    <path d="M455 40c6-2 12-1 19 3v6c-7-3-13-5-19-9z" fill="#2c6a34"/>
  </g>
  <g filter="url(#b1)">
    <path d="M402 61c2-6 6-9 9-9c4 0 8 3 10 8c1 5-2 12-6 14c-5 1-11-6-13-13z" fill="#f2f2ee"/>
    <path d="M400 62l8 2l4 8c-5-1-10-5-12-10z" fill="#dfe6e0"/>
    <ellipse cx="413" cy="51" rx="3" ry="2.5" fill="#b9cfae"/>
    <ellipse cx="387" cy="41" rx="2" ry="2" fill="#b8d6c6"/>
  </g>
  <g filter="url(#b1)">
    <path d="M408 92c4-6 12-9 22-10h14c8 1 16 4 19 10z" fill="#c9cace"/>
    <path d="M424.500 66c-1.500-10 3-17.500 12-17.500s13 6.500 11.800 16l-1.300 5h-21.500z" fill="#8f8c87"/>
    <ellipse cx="436.500" cy="69" rx="11" ry="14.500" fill="#caa288"/>
    <ellipse cx="440" cy="60" rx="6.500" ry="4" fill="#dcb9a0" opacity=".7"/>
    <path d="M425.300 63c.500-8.500 5-13 11.500-13s11.500 4 11.700 11c-2.500-3.500-5-5.500-7-6c-4 .500-9 1-12 3c-2 1.500-3.200 3-4.200 5z" fill="#8f8c87"/>
    <ellipse cx="422" cy="65" rx="3.700" ry="8" fill="#17171a"/>
    <path d="M422 56c3-6 9-9 15-8" stroke="#222" stroke-width="1.200" fill="none"/>
    <ellipse cx="432.500" cy="66.500" rx="1.700" ry="0.700" fill="#5a463e"/><ellipse cx="442" cy="66.500" rx="1.700" ry="0.700" fill="#5a463e"/>
        <path d="M434 77.500h6" stroke="#9a6a5e" stroke-width="1"/>
    <path d="M427 82v10" stroke="#222" stroke-width=".8"/>
  </g>
</g>
<!-- T4 active -->
<rect x="474.750" y="34.750" width="98" height="55.500" fill="#232323" stroke="#20e39c" stroke-width="1.500"/>
<!-- T5 purple -->
<g clip-path="url(#c5)">
  <rect x="574" y="34" width="98" height="57" fill="url(#pg)"/>
  <circle cx="622.700" cy="62.400" r="7.300" fill="#5b23c4"/>
  <circle cx="622.700" cy="61" r="6.500" fill="#6a2fd6" opacity=".6"/>
  <rect x="618.200" y="60.300" width="9" height="4.400" rx="2.200" fill="none" stroke="#fff" stroke-width="1"/>
  <circle cx="621.200" cy="62.500" r=".6" fill="#fff"/><circle cx="624.200" cy="62.500" r=".6" fill="#fff"/>
</g>
<!-- T6 beach -->
<g clip-path="url(#c6)">
  <rect x="672" y="34" width="99" height="57" fill="url(#sky)"/>
  <g filter="url(#b2)">
    <ellipse cx="700" cy="50" rx="18" ry="4" fill="#c6ddf2" opacity=".8"/>
    <ellipse cx="728" cy="39" rx="14" ry="3" fill="#d4e6f6" opacity=".9"/>
    <ellipse cx="684" cy="44" rx="10" ry="3" fill="#a9cdf0" opacity=".8"/>
  </g>
  <rect x="672" y="73" width="99" height="3" fill="#6cc9c6"/>
  <rect x="672" y="75.500" width="99" height="16" fill="#dfe6e6"/>
  <g filter="url(#b1)">
    <ellipse cx="705" cy="73" rx="5.500" ry="2" fill="#3e6a4a"/>
    <path d="M738 75.500h33v16h-40z" fill="#f0efe9"/>
    <path d="M765 91c0-12-3-24-8-32l2.200-1c5 9 8.500 21 9 33z" fill="#9a7a52"/>
    <path d="M757 52c-5-7-12-10-19-9c6 1 11 5 14 10c-6-3-13-2-18 3c6-2 13-1 18 2c-6 2-11 7-13 14c4-5 9-8 15-9c-3 5-5 11-4 18c2-6 5-11 9-14c1 6 1 12-1 18c4-5 6-11 5-18c4 3 7 8 8 13v-10c-1-3-3-6-5-8c3 0 5 1 7 2v-7c-3-1-6-1-9 0c2-4 5-7 9-8v-5c-5 1-9 4-12 8c0-7 2-13 7-17c-7 2-11 8-12 15c-2-5-5-8-9-10c3 3 5 7 6 11z" fill="#4a982c"/>
    <path d="M757 53c-5-2-12-2-17 3c6-2 12-1 17 1c-4 3-7 8-8 14c3-6 7-10 12-11c3 3 6 7 7 12c0-6-2-11-6-14c4-1 7 0 9 1v-5c-4-1-8 0-11 2c-1-1-2-2-3-3z" fill="#2a601c"/>
    <path d="M744 68c-2 4-3 8-3 12c2-5 5-8 9-10c-1 4-1 8 0 12c1-5 3-9 6-12z" fill="#8fae3c"/>
  </g>
  <g filter="url(#b1)">
    <path d="M702 92c3-5 10-7.500 18-8h14c8 .500 18 3 22 8z" fill="#1d1d20"/>
    <path d="M720 80h15v7h-15z" fill="#c59a80"/>
    <path d="M711.500 68c-2-11 3-21.500 16-21.500s17.500 9.500 15 21l-2.500 5h-26z" fill="#2b2521"/>
    <ellipse cx="727.500" cy="68" rx="12" ry="15.800" fill="#d6ad93"/>
    <ellipse cx="727" cy="60" rx="8" ry="4" fill="#e2bfa6" opacity=".6"/>
    <path d="M713.500 69c-1-11 5-19 14-19s15 7 14 17c-3-7-8-11-14-10.500c-6 .500-11 5-14 12.500z" fill="#2b2521"/>
    <path d="M717.500 63.500h8.500v6h-8.500zm10.800 0h8.500v6h-8.500z" fill="#c9b2e6" fill-opacity=".6" stroke="#2c2c30" stroke-width=".6" opacity=".92"/>
    <path d="M726 65h2.300" stroke="#2c2c30" stroke-width=".7"/>
    <path d="M721.500 74c3 3.200 9 3.200 12 0c-4 .800-8 .800-12 0z" fill="#f6f2f0" stroke="#a86a5e" stroke-width=".6"/>
  </g>
</g>
</g>
<!-- next arrow -->
<circle cx="789" cy="62" r="9.800" fill="#fff"/>
<circle cx="789" cy="62" r="8" fill="#0e72ed"/>
<path d="M787.300 58l4 4l-4 4" stroke="#fff" stroke-width="1.400" fill="none" stroke-linecap="round" stroke-linejoin="round"/>

<g transform="translate(0,34) scale(1,0.9895) translate(0,-34)">
<!-- name labels -->
<g font-family="Liberation Sans, sans-serif" font-size="7.600" fill="#fff">
  <rect x="181" y="77.600" width="89" height="10.600" rx="2.500" fill="#1b1b1b" opacity=".9"/>
  <use href="#micoff" x="183" y="79.500"/>
  <text x="194" y="86.600" textLength="72.500" lengthAdjust="spacingAndGlyphs">Phạm Thị Ánh Quỳnh</text>
  <rect x="279" y="77.600" width="38.500" height="10.600" rx="2.500" fill="#1b1b1b" opacity=".9"/>
  <use href="#micoff" x="281" y="79.500"/>
  <text x="292" y="86.600" textLength="23" lengthAdjust="spacingAndGlyphs">Van Le</text>
  <rect x="378" y="77.600" width="50.500" height="10.600" rx="2.500" fill="#1b1b1b" opacity=".9"/>
  <text x="380.200" y="86.600" textLength="45.400" lengthAdjust="spacingAndGlyphs">Nguyễn Nam</text>
  <rect x="476.500" y="77.600" width="52" height="10.600" rx="2.500" fill="#2e2e2e" opacity=".82"/>
  <text x="478.500" y="86.600" textLength="46.500" lengthAdjust="spacingAndGlyphs">Hạnh Thường</text>
  <rect x="575.500" y="77.600" width="96" height="10.600" rx="2.500" fill="#35264f" opacity=".85"/>
  <use href="#micoff" x="577.500" y="79.500"/>
  <text x="588.800" y="86.600" textLength="82" lengthAdjust="spacingAndGlyphs">Khoa's MeetGeek Note...</text>
  <rect x="674" y="77.600" width="45" height="10.600" rx="2.500" fill="#222" opacity=".85"/>
  <use href="#micoff" x="676" y="79.500"/>
  <text x="687.500" y="86.600" textLength="29" lengthAdjust="spacingAndGlyphs">Lê Ly Na</text>
  <text x="523.500" y="66.300" font-size="10.600" font-weight="bold" text-anchor="middle" textLength="70" lengthAdjust="spacingAndGlyphs">Hạnh Thường</text>
</g>
</g>
</svg>
<!--THUMBS-END-->

<!-- shared screen -->
<div id="black" class="abs"></div>
<div id="slide" class="abs">
  <div class="abs" style="left:14.5px;top:15px;width:20.5px;height:20.5px;border-radius:50%;background:#d1cfd1;border:1px solid #b8aa8e;box-sizing:border-box;box-shadow:0 1px 2px rgba(0,0,0,.25)"></div>
  <!--LAND-START-->
<svg class="abs" style="left:0;top:232px" width="658" height="122" viewBox="0 232 658 122">
<defs>
  <filter id="ink" x="-5%" y="-20%" width="110%" height="140%" color-interpolation-filters="sRGB">
    <feTurbulence type="fractalNoise" baseFrequency="0.11 0.17" numOctaves="4" seed="4" result="n"/>
    <feColorMatrix in="n" type="matrix" values="0 0 0 0 0  0 0 0 0 0  0 0 0 0 0  2.4 0 0 0 -0.95" result="holes"/>
    <feFlood flood-color="#e9ebed" result="w"/>
    <feComposite in="w" in2="holes" operator="in" result="wh"/>
    <feGaussianBlur in="SourceGraphic" stdDeviation="0.6" result="sg"/>
    <feComposite in="wh" in2="sg" operator="atop"/>
  </filter>
  <filter id="ink3" x="-5%" y="-20%" width="110%" height="140%" color-interpolation-filters="sRGB">
    <feTurbulence type="fractalNoise" baseFrequency="0.13 0.2" numOctaves="4" seed="21" result="n"/>
    <feColorMatrix in="n" type="matrix" values="0 0 0 0 0  0 0 0 0 0  0 0 0 0 0  2.2 0 0 0 -1.05" result="holes"/>
    <feFlood flood-color="#dfe1e4" result="w"/>
    <feComposite in="w" in2="holes" operator="in" result="wh"/>
    <feGaussianBlur in="SourceGraphic" stdDeviation="0.6" result="sg"/>
    <feComposite in="wh" in2="sg" operator="atop"/>
  </filter>
  <filter id="ink2" x="-5%" y="-20%" width="110%" height="140%" color-interpolation-filters="sRGB">
    <feTurbulence type="fractalNoise" baseFrequency="0.08 0.13" numOctaves="4" seed="12" result="n"/>
    <feColorMatrix in="n" type="matrix" values="0 0 0 0 0  0 0 0 0 0  0 0 0 0 0  2.6 0 0 0 -1.2" result="holes"/>
    <feFlood flood-color="#e4e6e9" result="w"/>
    <feComposite in="w" in2="holes" operator="in" result="wh"/>
    <feGaussianBlur in="SourceGraphic" stdDeviation="0.6" result="sg"/>
    <feComposite in="wh" in2="sg" operator="atop"/>
  </filter>
  <filter id="lb" x="-10%" y="-50%" width="120%" height="200%"><feGaussianBlur stdDeviation="2"/></filter>
  <filter id="lb2" x="-10%" y="-50%" width="120%" height="200%"><feGaussianBlur stdDeviation="5"/></filter>
  <filter id="lb0" x="-10%" y="-50%" width="120%" height="200%"><feGaussianBlur stdDeviation="0.4"/></filter>
  <linearGradient id="fadeL" x1="0" y1="0" x2="1" y2="0"><stop offset="0" stop-color="#fbfafa"/><stop offset="1" stop-color="#f6f5f5" stop-opacity="0"/></linearGradient>
  <linearGradient id="fadeR" x1="0" y1="0" x2="1" y2="0"><stop offset="0" stop-color="#f6f5f5" stop-opacity="0"/><stop offset="1" stop-color="#fbfafa"/></linearGradient>
  <linearGradient id="fadeB" x1="0" y1="0" x2="0" y2="1"><stop offset="0" stop-color="#f6f5f5" stop-opacity="0"/><stop offset="1" stop-color="#f8f7f7"/></linearGradient>
  <linearGradient id="bgw" x1="0" y1="0" x2="0" y2="1"><stop offset="0.2" stop-color="#f2f0f0" stop-opacity="0"/><stop offset="0.6" stop-color="#f2f0f0"/><stop offset="1" stop-color="#f2f0f0"/></linearGradient>
  <linearGradient id="mtL" x1="0" y1="0" x2="1" y2="0"><stop offset="0" stop-color="#6b7179"/><stop offset="0.45" stop-color="#7c8289"/><stop offset="0.75" stop-color="#a9adb3"/><stop offset="1" stop-color="#c9ccd0"/></linearGradient>
  <linearGradient id="mtR" x1="0" y1="0" x2="0" y2="1"><stop offset="0" stop-color="#686e76"/><stop offset="0.5" stop-color="#868b93"/><stop offset="1" stop-color="#a9adb3"/></linearGradient>
  <linearGradient id="mtM" x1="0" y1="0" x2="1" y2="0"><stop offset="0" stop-color="#b9bdc2"/><stop offset="0.6" stop-color="#9a9fa6"/><stop offset="1" stop-color="#7a8088"/></linearGradient>
  <linearGradient id="mL" x1="0" y1="0" x2="1" y2="0"><stop offset="0" stop-color="#000"/><stop offset="0.25" stop-color="#000" stop-opacity=".9"/><stop offset="1" stop-color="#000" stop-opacity="0"/></linearGradient>
  <linearGradient id="mR" x1="0" y1="0" x2="1" y2="0"><stop offset="0" stop-color="#000" stop-opacity="0"/><stop offset="0.8" stop-color="#000" stop-opacity=".95"/><stop offset="1" stop-color="#000"/></linearGradient>
  <linearGradient id="mB" x1="0" y1="0" x2="0" y2="1"><stop offset="0" stop-color="#000" stop-opacity="0"/><stop offset="1" stop-color="#000" stop-opacity=".8"/></linearGradient>
</defs>
<rect x="0" y="232" width="658" height="122" fill="url(#bgw)"/>
<mask id="edgeM" maskUnits="userSpaceOnUse" x="0" y="232" width="658" height="122">
  <rect x="0" y="232" width="658" height="122" fill="#fff"/>
  <rect x="0" y="232" width="40" height="122" fill="url(#mL)"/>
  <rect x="612" y="232" width="46" height="122" fill="url(#mR)"/>
  <rect x="0" y="338" width="658" height="16" fill="url(#mB)"/>
</mask>
<g mask="url(#edgeM)">
<!-- pink haze + pale sun -->
<g filter="url(#lb)">
  <rect x="196" y="284" width="330" height="11" fill="#f2dcea" opacity=".6"/>
  <rect x="150" y="294" width="400" height="8" fill="#f4e8f0" opacity=".5"/>
</g>
<circle cx="254" cy="279.500" r="16.500" fill="#fcf7f3" stroke="#f7e6ea" stroke-width="1" filter="url(#lb0)" opacity=".7"/>
<rect x="150" y="262" width="200" height="15" fill="#fdfcfc" filter="url(#lb)"/>
<!-- distant ridge -->
<g filter="url(#lb0)">
  <path d="M130 308c30-3 60-5 90-5c20-1 30-2 40-1c20 2 40 5 60 7c20 2 40 3 64 4v14h-254z" fill="#dfe0e3"/>
</g>
<!-- left mountain: light lower part -->
<g filter="url(#lb)"><path d="M4 318h190c-20 8-50 14-90 18c-40 4-70 6-100 5z" fill="#cdd0d4"/></g>
<!-- left mountain -->
<path filter="url(#ink3)" d="M-6 301c6-1 12-2 20-2c14-.500 26-.500 39 0c20 2 38 5 56 7c18 3 36 5 54 7c10 2 18 4 24 6c-30 3-60 5-90 6c-40 2-70 2-103 1z" fill="url(#mtL)"/>
<!-- back hill right -->
<path filter="url(#ink2)" d="M400 312c14-3 28-5 40-6.500c24-2.500 46-4.500 70-6c20-2 38-3.500 58-4.500c18-.800 36-1 53-.600c4 2 8 5 12 6.500c6 1.500 10 2 16 2.500c4 .300 6 .600 12 .600v24.800h-261z" fill="url(#mtR)"/>
<!-- light patches on back hill -->
<g filter="url(#lb)" fill="#e3e5e8" opacity=".8">
  <ellipse cx="575" cy="316" rx="26" ry="7"/>
  <ellipse cx="540" cy="320" rx="16" ry="5"/>
  <ellipse cx="612" cy="322" rx="14" ry="4"/>
  <ellipse cx="500" cy="312" rx="10" ry="3"/>
</g>
<!-- mid hill / front island -->
<path filter="url(#ink)" d="M262 323c6-2 10-4 16-6c12-3 26-4 40-4c18-.500 36-.500 53-.500c24-1.500 46-3.500 69-4.500v21.500c-60 .500-120 .300-178-.300z" fill="url(#mtM)"/>
<path filter="url(#ink3)" d="M396 322c10-5 26-9 44-11.500c16-1.500 30-1.500 46-.500c10 3 18 6 26 10c8 3 14 6 18.700 9.600c-40 .800-95 .800-134.700 .200z" fill="#5a6068"/>
<path d="M420 328.600c30-.800 80-.800 110.700 .800c-30 .600-80 .500-110.700-.800z" fill="#3f454d" filter="url(#lb0)"/>
<!-- rocks -->
<g filter="url(#lb0)" fill="#474d55">
  <path d="M241 326.200c4-1.200 12-1.600 20-.900l1 1.300c-8 .500-14 .500-21-.400z"/>
  <path d="M268 327.500c6-2.600 14-3.600 24-3.200c10 .400 18 2 23 4c-16 .600-34 .500-47-.800z" opacity=".9"/>
  <path d="M383 328c4-3 10-4.500 17-4.500s12 1.500 16 4.500c-10 .600-24 .600-33 0z" opacity=".85"/>
  <path d="M450 328.400c10-1.800 30-2.600 50-2c12 .400 24 1.200 30 2.400c-24 .800-58 .700-80-.400z" opacity=".8"/>
  <path d="M167 325.500h10m4 0h18m4-.300h26" stroke="#6a7078" stroke-width="1" fill="none"/>
</g>
<!-- waterline -->
<g filter="url(#lb0)"><path d="M236 329.400h420" stroke="#e6e8ea" stroke-width="1.200"/></g>
<!-- reflections -->
<path filter="url(#ink2)" d="M250 331h400v14c-40 5-120 8-200 8c-90 0-160-6-200-22z" fill="#c4c7cc" opacity=".85"/>
<g filter="url(#lb)"><path d="M268 331h262c-30 7-200 8-262 0z" fill="#aeb2b8" opacity=".7"/></g>
<!-- tree -->
<g stroke="#54527e" fill="none" stroke-linecap="round" stroke-linejoin="round" filter="url(#lb0)">
  <path d="M430.500 318.500c-.300-5-.500-9-.800-13c-.800-4-2.500-8-4.700-11.500" stroke-width="3" stroke="#4a4a6e"/>
  <path d="M427.800 318c.300-5 .500-8 1-12" stroke-width="2" stroke="#4a4a6e"/>
  <path d="M430 306c1-5 3-10 6-14c2-3 3-7 4-11" stroke-width="1.900"/>
  <path d="M428 306c-8-3-18-5-28-8.300c-6-2-11-4-17-6.700c-8-3-18-4.500-28.500-6.200" stroke-width="1.800"/>
  <path d="M424 304c-12-1.500-26-2.500-41-2.500" stroke-width="1.300"/>
  <path d="M434.400 297.700c8-2 16-3.500 24.600-4.700c10-1.300 19-2.300 28.700-3c8-.500 15-.800 22.800-1" stroke-width="1.700"/>
  <path d="M400 297.700c-4-4-9-6-15-7M392 295c-6 1-12 1-18-1M383 291c-1-4-5-6-10-7M372 287c-6 1-11 0-16-2M409 300c-5 2-10 5-14 9M398 302c-4 3-9 4-14 4M383 301.500c-5-1-9 0-13 2M366 286c-3-3-7-4-12-4" stroke-width="1"/>
  <path d="M459 293c3-4 8-7 14-8M470 291.500c6-3 13-4 20-3M487.700 290c5-3 11-4 17-3M446 295.500c8 1 16 3 24 6M468 301c7 0 13 1 19 3M478 291c8 2 16 2 24 1M500 289.300c4 2 8 4 10 8M496 286c4-1 9-1 14 1" stroke-width="1"/>
  <path d="M425 294c-2-5-6-9-12-12M426 296c0-6 1-11 4-16M436 292c4-4 9-7 16-8M440 281c2-3 5-5 9-6M413 282c-4-2-8-2-13-1M430 280c-2-3-4-5-8-6M452 284c4-2 9-2 14-1M420 289c-5-2-10-3-16-2" stroke-width=".8" opacity=".8"/>
  <path d="M356 285c-3-2-6-2-10-1M362 290c-4 2-8 3-12 2M376 306c-4 1-6 3-8 5M402 290c0-3-2-5-4-6M466 283c2-2 5-3 8-3M486 304c4 1 7 3 9 6M504 297c3 0 6 1 8 3" stroke-width=".7" opacity=".8"/>
</g>
<g stroke="#a9abbe" fill="none" stroke-linecap="round" filter="url(#lb0)" opacity=".65">
  <path d="M430 331c-.500 5-1.500 9-3 14M428 340c-6 4-14 6-26 7M429 340c8 4 20 6 32 6M405 346c-8 2-16 3-24 3" stroke-width="1.500"/>
</g>
</g>
</svg>
<!--LAND-END-->
  <div class="ln" style="left:48px;top:21px;transform:translate(0.2px,0.8px);opacity:.999;font-size:21.9px;font-weight:bold;color:#38271d;-webkit-text-stroke:0.25px #38271d;line-height:28px;height:28px">I. Mở đầu</div>

<div id="txt" class="abs" style="left:0;top:0;width:658px;height:354px;filter:grayscale(1);transform:translate(0.3px,0.6px)">
  <div class="ln j" style="left:60px;top:58px;width:565px">•Thiền tông: dòng tư tưởng chủ lưu Phật giáo Đại thừa, nhấn mạnh trực nghiệm,&nbsp; giải</div>
  <div class="ln" style="left:60px;top:78px">thoát ngay trong đời sống.</div>
  <div class="ln" style="left:60px;top:98px">•Biểu hiện qua thi ca Thiền học:</div>
  <div class="ln" style="left:86px;top:117px">•</div>
  <div class="ln j" style="left:100px;top:117px;width:525px">Chứng Đạo Ca (Huyền Giác) <span class="ar">→</span> tuyên ngôn đốn ngộ, tinh thần bất nhị, vô trụ</div>
  <div class="ln" style="left:100px;top:137px">(Kinh Kim Cang, Kinh Hoa Nghiêm).</div>
  <div class="ln" style="left:86px;top:157px">•</div>
  <div class="ln j" style="left:100px;top:157px;width:525px">Phóng Cuồng Ngâm (Tuệ Trung Thượng Sĩ) <span class="ar">→</span> giọng phóng khoáng, phá chấp,</div>
  <div class="ln" style="left:100px;top:176px">nhập thế, gần gũi tinh thần Kinh Duy Ma Cật.</div>
  <div class="ln j" style="left:60px;top:196px;width:565px">•Mục đích tham luận: phân tích, đối chiếu với kinh điển Đại thừa (Pháp Hoa, Kim</div>
  <div class="ln j" style="left:60px;top:216px;width:565px">Cang, Hoa Nghiêm, Lăng Già, Duy Ma Cật) <span class="ar">→</span> làm nổi bật tính nhất quán, phong</div>
  <div class="ln" style="left:60px;top:236px">phú của Thiền trong văn học.</div>
  <div class="ln j" style="left:60px;top:255px;width:565px">•Ý nghĩa: góp phần soi sáng giá trị tư tưởng, văn hóa, nghệ thuật của Phật giáo Việt</div>
  <div class="ln" style="left:60px;top:275px">Nam và phương Đông.</div>
</div>
</div>

<!--TB-START-->
<svg class="abs" style="left:0;top:466px" width="946" height="37" viewBox="0 466 946 37" fill="none" stroke="#f2f2f2" stroke-width="1.100" stroke-linecap="round" stroke-linejoin="round">
<!-- audio -->
<rect x="30.600" y="474" width="4.600" height="8.400" rx="2.300"/>
<path d="M28.300 480.500a4.600 4.600 0 0 0 9.200 0M32.900 485.200v2.300M30.400 487.600h5"/>
<path d="M26 487.600L39.800 473.600" stroke="#f2375a" stroke-width="1.700"/>
<path d="M49.300 482l2.100-2.100l2.100 2.100" stroke-width="1.100"/>
<!-- video -->
<rect x="83" y="476.600" width="10" height="8.400" rx="2"/>
<path d="M94.600 479.400l3.200-1.800v6.400l-3.200-1.800z"/>
<path d="M110.100 482l2.100-2.100l2.100 2.100" stroke-width="1.100"/>
<!-- participants -->
<circle cx="310.800" cy="477.400" r="1.900"/>
<path d="M307.600 485.600v-1.400a3.200 3.200 0 0 1 6.400 0v1.400z"/>
<circle cx="316.600" cy="479.200" r="1.500"/>
<path d="M315.200 482.300a2.600 2.600 0 0 1 4.200 2v1.300h-3.600"/>
<path d="M343.900 481.400l2.100-2.100l2.100 2.100" stroke-width="1.100"/>
<!-- chat -->
<path d="M378.200 476.400v-.600a2 2 0 0 1 2-2h6.200a2 2 0 0 1 2 2v4.200a2 2 0 0 1-2 2h-.400"/>
<path d="M376.400 476.800h7.200a2 2 0 0 1 2 2v4.200a2 2 0 0 1-2 2h-3.600l-2.600 2.200v-2.200h-1a2 2 0 0 1-2-2v-4.200a2 2 0 0 1 2-2z"/>
<path d="M377.600 481h.100M380 481h.100M382.400 481h.100" stroke-width="1.200"/>
<path d="M399.600 481.400l2.100-2.100l2.100 2.100" stroke-width="1.100"/>
<!-- react heart -->
<path d="M434.600 486.800c-3.400-2.400-7.400-5.200-7.400-8.600c0-2.200 1.700-3.800 3.700-3.800c1.500 0 2.900.900 3.700 2.200c.800-1.300 2.200-2.200 3.700-2.200c2 0 3.700 1.600 3.700 3.800c0 3.400-4 6.200-7.400 8.600z"/>
<!-- share -->
<rect x="481.700" y="474.600" width="15.300" height="11.400" rx="2" fill="#22e08c" stroke="none"/>
<path d="M489.300 483.400v-5.800M486.700 479.800l2.600-2.600l2.600 2.600" stroke="#1b3a2a" stroke-width="1.300"/>
<!-- ai companion -->
<path d="M547.800 474.600c.600 3.600 2 5.200 5.800 5.900c-3.800.700-5.200 2.300-5.800 5.900c-.600-3.600-2-5.200-5.800-5.900c3.800-.700 5.200-2.300 5.800-5.900z" fill="#d3e6f3" stroke="#d3e6f3" stroke-width=".6"/>
<path d="M553.600 473.400c.200 1.300.700 1.800 2 2c-1.300.200-1.800.700-2 2c-.200-1.300-.700-1.800-2-2c1.300-.200 1.800-.700 2-2z" fill="#d3e6f3" stroke="none"/>
<!-- meeting info -->
<circle cx="608.600" cy="480.300" r="6.900"/>
<path d="M607.400 479.300h1.400v4.400M607 483.800h3.400" stroke-width="1.200"/>
<circle cx="608.600" cy="476.800" r=".900" fill="#f2f2f2" stroke="none"/>
<!-- apps -->
<circle cx="667.400" cy="476.900" r="2.500"/>
<circle cx="659.700" cy="484.300" r="2.500"/>
<path d="M657.100 479.400v-2.400a2.600 2.600 0 0 1 2.600-2.600h2.400M670 481.800v2.400a2.600 2.600 0 0 1-2.600 2.600h-2.400"/>
<!-- more -->
<circle cx="713.900" cy="480.600" r="7.200"/>
<path d="M710.600 480.700h.100M713.900 480.700h.100M717.200 480.700h.100" stroke-width="1.500"/>
<!-- leave -->
<path d="M917.200 473.300h8.400v11.600l-4.800 2.200v-11.600l4.800-2.200" stroke="#e8174f" stroke-width="1.200"/>
<path d="M920.800 475.500v11.600" stroke="#e8174f" stroke-width="1.600"/>
<circle cx="916" cy="476.100" r="1.700" fill="#444" stroke-width="1"/>
<path d="M914.300 479.400l2.600-.800l1.800 2.600l1.400.600l-.400 1.200l-2-.600l-.800-1l-.500 2.200l1.800 1.800l.300 3l-1.300.100l-.400-2.500l-1.800-1.400l-.900 2.200l-2 1.900l-.900-.900l1.800-1.800l.800-3.800l-1.200.700l-.300 1.700l-1.200-.200l.400-2.400z" fill="#444" stroke-width=".9"/>
</svg>
<!--TB-END-->


<!-- taskbar -->
<div class="abs" style="left:0;top:501.5px;width:946px;height:1.5px;background:#333"></div>
<div id="taskbar" class="abs"></div>
<!--TK-START-->
<svg class="abs" style="left:0;top:503px" width="946" height="26" viewBox="0 503 946 26" font-family="Liberation Sans, sans-serif">
<defs>
  <linearGradient id="wl" x1="0" y1="0" x2="1" y2="1"><stop offset="0" stop-color="#4cc2ff"/><stop offset="1" stop-color="#0a78d4"/></linearGradient>
  <linearGradient id="edge" x1="0" y1="0" x2="1" y2="1"><stop offset="0" stop-color="#35c1f1"/><stop offset="0.5" stop-color="#1b74d0"/><stop offset="1" stop-color="#0c4a9e"/></linearGradient>
  <linearGradient id="cop" x1="0" y1="0" x2="1" y2="1"><stop offset="0" stop-color="#2a8af0"/><stop offset="0.4" stop-color="#7a5af0"/><stop offset="0.7" stop-color="#e85aa8"/><stop offset="1" stop-color="#f6a83a"/></linearGradient>
  <linearGradient id="sun" x1="0" y1="0" x2="0" y2="1"><stop offset="0" stop-color="#ffb11a"/><stop offset="1" stop-color="#f58a12"/></linearGradient>
  <filter id="tb0" x="-20%" y="-20%" width="140%" height="140%"><feGaussianBlur stdDeviation="0.35"/></filter>
</defs>
<!-- weather -->
<circle cx="19.500" cy="517" r="5.600" fill="url(#sun)"/>
<path d="M17.200 525.200a2.800 2.800 0 0 1 .300-5.500a3.700 3.700 0 0 1 6.900-.600a3.100 3.100 0 0 1 .200 6.100z" fill="#d9e6f6" stroke="#a9c6ea" stroke-width=".5"/>
<circle cx="23.900" cy="511.700" r="4.700" fill="#d42a22"/>
<text x="23.900" y="514.300" font-size="7" font-weight="bold" font-style="italic" fill="#fff" text-anchor="middle">7</text>
<!-- windows logo -->
<g fill="url(#wl)"><rect x="207.600" y="511.400" width="6.700" height="6.700" rx=".6"/><rect x="215.200" y="511.400" width="6.700" height="6.700" rx=".6"/><rect x="207.600" y="519" width="6.700" height="6.700" rx=".6"/><rect x="215.200" y="519" width="6.700" height="6.700" rx=".6"/></g>
<!-- search box -->
<rect x="230.400" y="508.100" width="134.700" height="19.600" rx="9.800" fill="#f7f6ee" stroke="#e6e2d2" stroke-width=".6"/>
<circle cx="241.300" cy="517.300" r="2.900" fill="none" stroke="#222" stroke-width="1.100"/>
<path d="M243.500 519.600l2.300 2.400" stroke="#222" stroke-width="1.300" stroke-linecap="round"/>
<!-- search doodle -->
<g filter="url(#tb0)">
  <path d="M335 526c4-5 10-9 16-10.500c5-1 10 0 13 2c.500 3-1 6-4 8.500z" fill="#d98a3a"/>
  <path d="M337 525.500c5-4 11-7 17-8c4-.500 8 0 10 1.500c-6 0-14 2-20 6.500z" fill="#5aa34a"/>
  <path d="M341 526c5-3.500 12-5.500 22-6c0 2-1 4-3 6z" fill="#e9c46a"/>
  <path d="M346 526c4-2 9-3.500 15-3.500c-.500 1.500-1.500 2.500-2.500 3.500z" fill="#3d8ac4"/>
  <path d="M336 526c3-3 6-5 10-6.500c-2 2-3 4-3.500 6.500z" fill="#7a4a9a"/>
  <path d="M351 515.500v-3M354.500 515v-3.500M358 515.500v-3" stroke="#5a3a22" stroke-width=".6"/>
  <circle cx="351" cy="512" r="1.600" fill="#2f7a3a"/><circle cx="354.500" cy="511" r="1.800" fill="#2f7a3a"/><circle cx="358" cy="512" r="1.600" fill="#2f7a3a"/>
</g>
<!-- task view -->
<rect x="378.500" y="510.800" width="9.700" height="9.700" rx="1" fill="#f4f4f4" stroke="#d0d0d0" stroke-width=".4"/>
<rect x="376.500" y="513" width="8" height="8" fill="#9a9a9a" opacity=".55"/>
<rect x="372.600" y="515.400" width="9.600" height="9.300" rx="1" fill="#1c1c1c"/>
<rect x="376.800" y="515.400" width="5.400" height="5.200" fill="#8a8a8a"/>
<!-- pink dots app -->
<g filter="url(#tb0)">
  <path d="M401 512.500h11.500v6.500h-3.500v4.500h-4.500v-4.500h-3.500z" fill="#c4c4c4"/>
  <rect x="401.500" y="513" width="4.800" height="5.300" fill="#e2e2e2"/><rect x="407.200" y="513" width="4.800" height="5.300" fill="#e2e2e2"/><rect x="404.300" y="518.800" width="4.800" height="4.400" fill="#e2e2e2"/>
  <circle cx="403.900" cy="515.300" r="1" fill="#e0566a"/><circle cx="409.600" cy="515.300" r="1" fill="#e0566a"/><circle cx="406.700" cy="521" r="1" fill="#e0566a"/>
</g>
<!-- teams -->
<g filter="url(#tb0)">
  <circle cx="439.400" cy="513.600" r="1.900" fill="#5059c9"/>
  <rect x="436.600" y="516" width="6" height="6.600" rx="1.400" fill="#5059c9"/>
  <circle cx="434.600" cy="512.800" r="2.500" fill="#7b83eb"/>
  <path d="M430.600 516h8.600v5a4.300 4.300 0 0 1-8.600 0z" fill="#7b83eb"/>
  <rect x="427.400" y="514.400" width="7.600" height="7.600" rx=".9" fill="#4b53bc"/>
  <path d="M429.300 516.300h3.800M431.200 516.300v4.300" stroke="#fff" stroke-width="1"/>
</g>
<!-- edge -->
<g filter="url(#tb0)">
  <circle cx="462" cy="518" r="7.500" fill="url(#edge)"/>
  <path d="M455 515.500a7.500 7.500 0 0 1 14.400 1.500c-1.500-2.500-5-3.500-8-2.500c-3 1-5 3.500-4.500 7a7.500 7.500 0 0 1-1.900-6z" fill="#4fd1a0" opacity=".9"/>
  <path d="M461 516.500c2.500-1 5 .2 5.600 2.200c.5 1.800-.8 3-2.600 3c-2.200 0-3.800-1.400-3.800-3.400c0-.7.300-1.300.8-1.800z" fill="#f3f0e2"/>
</g>
<rect x="460.500" y="528" width="3" height="1" fill="#777"/>
<!-- explorer -->
<g filter="url(#tb0)">
  <path d="M481.600 513.200a1 1 0 0 1 1-1h4l1.500 1.600h8a1 1 0 0 1 1 1v8.900a1 1 0 0 1-1 1h-13.500a1 1 0 0 1-1-1z" fill="#f5b921"/>
  <path d="M481.600 515.600h15.500v8.100a1 1 0 0 1-1 1h-13.500a1 1 0 0 1-1-1z" fill="#fcd45a"/>
  <rect x="484.600" y="520.800" width="9.500" height="3.900" rx=".6" fill="#2f7fd8"/>
</g>
<!-- zalo -->
<g filter="url(#tb0)">
  <path d="M509.800 518a6.900 6.500 0 1 1 3.400 5.600l-2.900 1l.8-2.700a6.300 6.300 0 0 1-1.300-3.900z" fill="#fdfdfd" stroke="#1a6af0" stroke-width="1.200"/>
  <text x="516.600" y="520" font-size="4.600" font-weight="bold" fill="#1a6af0" text-anchor="middle">Zalo</text>
</g>
<circle cx="522.600" cy="512.600" r="4.600" fill="#e0262c"/>
<text x="522.600" y="514.600" font-size="5.400" font-weight="bold" fill="#fff" text-anchor="middle">5+</text>
<rect x="515" y="528" width="3" height="1" fill="#777"/>
<!-- chrome -->
<g filter="url(#tb0)">
  <circle cx="543.500" cy="518" r="7.300" fill="#fbbc05"/>
  <path d="M543.500 518L537.200 514.300A7.300 7.300 0 0 1 549.800 514.300z" fill="#ea4335"/>
  <path d="M543.500 510.700a7.300 7.300 0 0 1 6.300 3.600h-6.300z" fill="#ea4335"/>
  <path d="M537.200 514.300a7.300 7.300 0 0 0 6.300 11l3.200-5.500l-6.400 0z" fill="#34a853"/>
  <circle cx="543.500" cy="518" r="3.400" fill="#fff"/>
  <circle cx="543.500" cy="518" r="2.700" fill="#4285f4"/>
</g>
<circle cx="549.400" cy="512.200" r="4.500" fill="#1b4a3c"/>
<text x="549.400" y="514.100" font-size="5.200" font-weight="bold" fill="#e8f0e8" text-anchor="middle">P</text>
<rect x="542" y="528" width="3" height="1" fill="#777"/>
<!-- store -->
<g filter="url(#tb0)">
  <path d="M567.500 514.500v-1.500a2.300 2.300 0 0 1 2.300-2.300h2.600a2.300 2.300 0 0 1 2.300 2.300v1.500" fill="none" stroke="#1f5fae" stroke-width="1"/>
  <rect x="564" y="513.800" width="14.300" height="11" rx="1.300" fill="#1f66c0"/>
  <rect x="568.200" y="516.200" width="2.600" height="2.600" fill="#f25022"/><rect x="571.400" y="516.200" width="2.600" height="2.600" fill="#7fba00"/>
  <rect x="568.200" y="519.400" width="2.600" height="2.600" fill="#00a4ef"/><rect x="571.400" y="519.400" width="2.600" height="2.600" fill="#ffb900"/>
</g>
<circle cx="576.800" cy="512.200" r="4.500" fill="#2d7bb0"/>
<text x="576.800" y="514.200" font-size="5.600" font-weight="bold" fill="#fff" text-anchor="middle">1</text>
<!-- copilot -->
<g filter="url(#tb0)">
  <path d="M594.600 511.500c1.500-.9 4-1 6-.6c2.500.5 3.500 2 4.200 4.200l.8 3c.6 2.200.2 4.300-1.800 5.600c-1.600 1-4 1-6 .6c-2.500-.5-3.500-2-4.200-4.200l-.8-3c-.6-2.200-.2-4.300 1.800-5.600z" fill="url(#cop)"/>
  <path d="M596.500 515.500c.4-1.500 1.600-2.300 3-2.300h1.600l-1.600 6.500c-.4 1.500-1.600 2.300-3 2.300h-1.600z" fill="#f5f0f4" opacity=".85"/>
</g>
<!-- capcut -->
<rect x="619.200" y="512" width="12.700" height="12.100" rx="2.200" fill="#fbfbfb" stroke="#e4e0dc" stroke-width=".4"/>
<path d="M621.600 515.600h5.400l3 1.600v-1.600M621.600 520.500h5.400l3-1.600v1.600M621.600 515.600l8.400 4.900M621.600 520.500l8.400-4.900" fill="none" stroke="#111" stroke-width="1.100" stroke-linejoin="round"/>
<!-- tiktok -->
<circle cx="652.500" cy="518" r="7.500" fill="#0a0a0a"/>
<path d="M653.400 513.600v6.400a2.100 2.100 0 1 1-2.100-2.100" fill="none" stroke="#ff3b5c" stroke-width="1.500" transform="translate(.5,.4)"/>
<path d="M653.400 513.600v6.400a2.100 2.100 0 1 1-2.100-2.100" fill="none" stroke="#3af0f0" stroke-width="1.500" transform="translate(-.5,-.4)"/>
<path d="M653.400 513.600v6.400a2.100 2.100 0 1 1-2.100-2.100M653.400 513.800c.4 1.600 1.500 2.500 3 2.700" fill="none" stroke="#fff" stroke-width="1.400"/>
<!-- duolingo -->
<g filter="url(#tb0)">
  <path d="M672.400 518c0-5 2-7.200 3.600-7.200c.9 0 1.500 1 2 1.700h4c.5-.7 1.100-1.700 2-1.700c1.600 0 3.600 2.200 3.600 7.200s-3.400 7.500-7.600 7.500s-7.600-2.500-7.600-7.500z" fill="#78c800"/>
  <ellipse cx="677.200" cy="517.600" rx="2.500" ry="3" fill="#fff"/><ellipse cx="682.800" cy="517.600" rx="2.500" ry="3" fill="#fff"/>
  <ellipse cx="677.700" cy="517.800" rx="1.100" ry="1.600" fill="#3c3c3c"/><ellipse cx="682.300" cy="517.800" rx="1.100" ry="1.600" fill="#3c3c3c"/>
  <path d="M678.600 520.600h2.800l-1.400 1.900z" fill="#ffb020"/>
</g>
<!-- roblox -->
<g filter="url(#tb0)">
  <path d="M702.600 510.800l11.800 3l-3 11.100l-11.800-3z" fill="#b4bec6"/>
  <path d="M702.600 510.800l11.800 3l-1 3.600l-11.700-3.200z" fill="#d6dde2"/>
  <path d="M705.900 516.200l3.300.9l-.9 3.200l-3.300-.9z" fill="#f4f2f0"/>
</g>
<!-- zoom active -->
<rect x="722.300" y="506.400" width="23.600" height="24" rx="2.500" fill="#f6f3f2" opacity=".85"/>
<rect x="726.700" y="510.300" width="15.400" height="15.400" rx="5.800" fill="#0b5cff"/>
<text x="734.400" y="519.300" font-size="4.400" font-weight="bold" fill="#fff" text-anchor="middle">zoom</text>
<rect x="729" y="527.800" width="10.600" height="1.400" rx=".6" fill="#2a8a8c"/>
<!-- tray chevron -->
<path d="M795.400 520l3.200-3.200l3.200 3.200" fill="none" stroke="#2a2a2a" stroke-width="1.200" stroke-linecap="round" stroke-linejoin="round"/>
<!-- cloud -->
<path d="M815.400 521a2.400 2.400 0 0 1 .2-4.800a3.400 3.400 0 0 1 6.300-.6a2.700 2.700 0 0 1 .2 5.400z" fill="#b8b8b8" stroke="#3a3a3a" stroke-width=".8"/>
<!-- mic + location -->
<g fill="none" stroke="#3b8492" stroke-width=".9" stroke-linecap="round" stroke-linejoin="round">
  <rect x="832.600" y="512.800" width="2.600" height="4.800" rx="1.300" fill="#bcd6d6"/>
  <path d="M831.400 516.600a2.500 2.500 0 0 0 5 0M833.900 519.200v1"/>
  <path d="M844.600 515.800l-6 3l3.200.6l.8 3.200z" fill="none"/>
</g>
<!-- wifi -->
<g fill="none" stroke="#2a2a2a" stroke-width="1" stroke-linecap="round">
  <path d="M852.400 516.300a7.200 7.200 0 0 1 10 0"/>
  <path d="M854 518.100a4.900 4.900 0 0 1 6.800 0"/>
  <path d="M855.700 519.800a2.500 2.500 0 0 1 3.400 0"/>
  <circle cx="857.400" cy="521" r=".5" fill="#2a2a2a"/>
</g>
<!-- volume -->
<g fill="none" stroke="#2a2a2a" stroke-width=".9" stroke-linecap="round" stroke-linejoin="round">
  <path d="M867.600 516.400h1.800l2.600-2.400v7.600l-2.600-2.400h-1.800z"/>
  <path d="M873.600 516a2.600 2.600 0 0 1 0 3.600M875.200 514.600a4.700 4.700 0 0 1 0 6.400M876.800 513.400a6.600 6.600 0 0 1 0 8.800"/>
</g>
<!-- battery -->
<g fill="none" stroke="#2a2a2a" stroke-width=".9" stroke-linejoin="round">
  <rect x="882.800" y="515.400" width="8" height="5.600" rx="1.400"/>
  <path d="M891.300 517v2.400" stroke-width="1.200"/>
  <rect x="883.600" y="516.200" width="3.200" height="4" rx=".6" fill="#2a2a2a" stroke="none"/>
  <path d="M883.400 513.400l1.600 1.400M885.800 513v1.600" stroke-width=".8"/>
</g>
</svg>
<!--TK-END-->
<!--TX-START-->
<div class="fx" style="left:9.8px;top:5.23px;font-size:8.0px;font-weight:bold;color:#fff;transform:scaleX(0.909)">zoom</div>
<div class="fx" style="left:9.8px;top:14.15px;font-size:8.8px;font-weight:bold;color:#fff;transform:scaleX(1.038)">Workplace</div>
<div class="fx" style="left:122.1px;top:12.20px;font-size:7.8px;font-weight:normal;color:#e4e4e4;transform:scaleX(0.966)">Meeting</div>
<div class="fx" style="left:282.7px;top:12.23px;font-size:8.0px;font-weight:normal;color:#e4e4e4;transform:scaleX(0.874)">Hạnh Thường's screen</div>
<div class="fx" style="left:687.7px;top:10.46px;font-size:8.2px;font-weight:normal;color:#fff;transform:scaleX(0.954)">Sign in</div>
<div class="fx" style="left:769.8px;top:9.63px;font-size:8.0px;font-weight:normal;color:#fff;transform:scaleX(0.910)">Recording</div>
<div class="fx" style="left:817.6px;top:9.63px;font-size:8.0px;font-weight:normal;color:#fff;transform:scaleX(0.936)">View</div>
<div class="fx" style="left:22.4px;top:492.45px;font-size:7.5px;font-weight:normal;color:#c9c9c9;transform:scaleX(1.042)">Audio</div>
<div class="fx" style="left:80.4px;top:492.45px;font-size:7.5px;font-weight:normal;color:#c9c9c9;transform:scaleX(1.019)">Video</div>
<div class="fx" style="left:293.7px;top:492.45px;font-size:7.5px;font-weight:normal;color:#c9c9c9;transform:scaleX(1.018)">Participants</div>
<div class="fx" style="left:324.0px;top:475.94px;font-size:7.4px;font-weight:normal;color:#b4b4b4;transform:scaleX(0.923)">63</div>
<div class="fx" style="left:374.6px;top:492.45px;font-size:7.5px;font-weight:normal;color:#c9c9c9;transform:scaleX(0.959)">Chat</div>
<div class="fx" style="left:425.9px;top:492.45px;font-size:7.5px;font-weight:normal;color:#c9c9c9;transform:scaleX(0.924)">React</div>
<div class="fx" style="left:480.2px;top:492.45px;font-size:7.5px;font-weight:normal;color:#c9c9c9;transform:scaleX(0.949)">Share</div>
<div class="fx" style="left:525.0px;top:492.45px;font-size:7.5px;font-weight:normal;color:#c9c9c9;transform:scaleX(1.010)">AI Companion</div>
<div class="fx" style="left:586.8px;top:492.45px;font-size:7.5px;font-weight:normal;color:#c9c9c9;transform:scaleX(1.047)">Meeting info</div>
<div class="fx" style="left:655.3px;top:492.45px;font-size:7.5px;font-weight:normal;color:#c9c9c9;transform:scaleX(0.976)">Apps</div>
<div class="fx" style="left:704.8px;top:492.45px;font-size:7.5px;font-weight:normal;color:#c9c9c9;transform:scaleX(1.053)">More</div>
<div class="fx" style="left:908.7px;top:492.45px;font-size:7.5px;font-weight:normal;color:#c9c9c9;transform:scaleX(0.944)">Leave</div>
<div class="fx" style="left:31.7px;top:510.24px;font-size:7.4px;font-weight:normal;color:#1c1c1c;transform:scaleX(0.939)">29°C</div>
<div class="fx" style="left:31.7px;top:518.74px;font-size:7.4px;font-weight:normal;color:#2a2a2a;transform:scaleX(1.008)">Nắng rải rác</div>
<div class="fx" style="left:252.9px;top:515.47px;font-size:8.3px;font-weight:normal;color:#555;transform:scaleX(0.954)">Search</div>
<div class="fx" style="left:909.6px;top:509.51px;font-size:7.2px;font-weight:normal;color:#1c1c1c;transform:scaleX(1.004)">6:08 PM</div>
<div class="fx" style="left:902.5px;top:519.21px;font-size:7.2px;font-weight:normal;color:#1c1c1c;transform:scaleX(1.063)">8/22/2025</div>
<!--TX-END-->
</body>
</html>
